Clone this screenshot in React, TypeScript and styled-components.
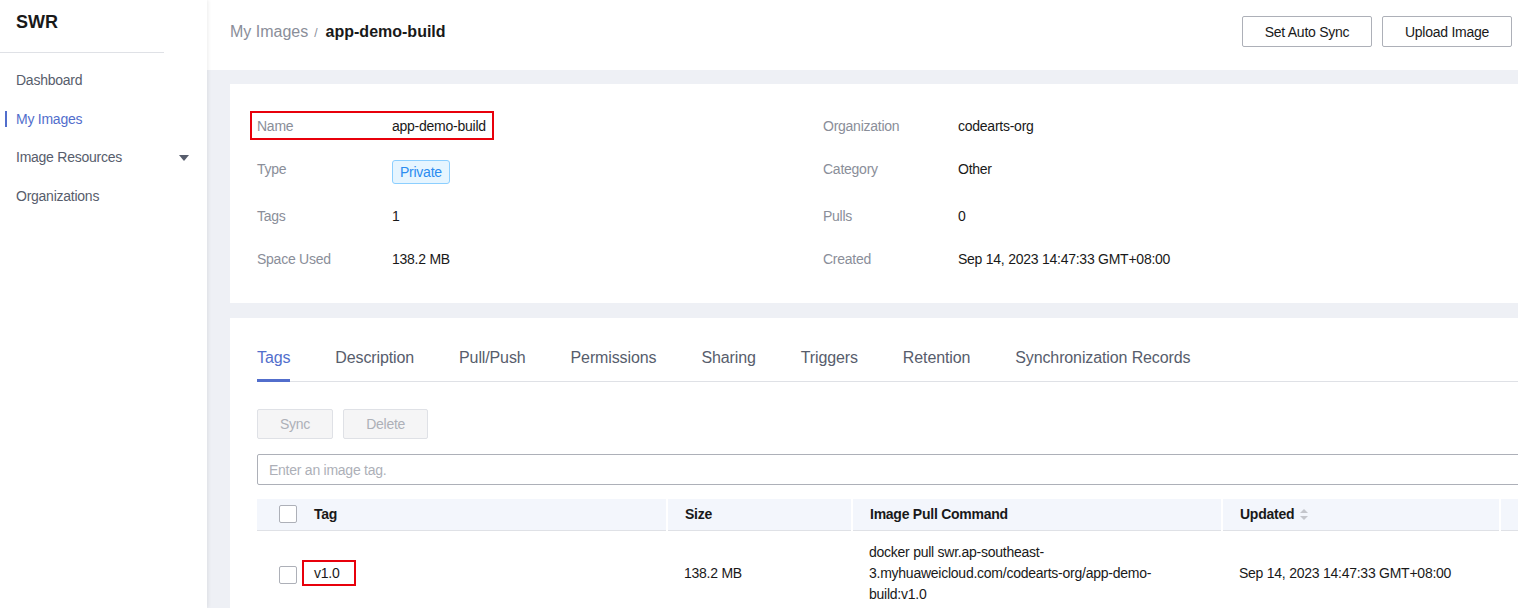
import React from "react";
import styled, { createGlobalStyle } from "styled-components";

const GlobalStyle = createGlobalStyle`
  html, body {
    margin: 0;
    padding: 0;
    overflow: hidden;
    background: #eef0f5;
  }
  body {
    font-family: "Liberation Sans", Arial, sans-serif;
    color: #191919;
    letter-spacing: -0.25px;
  }
  * { box-sizing: border-box; }
  button, input { letter-spacing: inherit; }
`;

const Layout = styled.div`
  display: grid;
  grid-template-columns: 207px 1fr;
  width: 1518px;
  height: 608px;
  overflow: hidden;
`;

const Sidebar = styled.aside`
  background: #fff;
  box-shadow: 1px 0 4px rgba(0, 0, 0, 0.08);
  position: relative;
  z-index: 1;
  display: flex;
  flex-direction: column;
`;

const Brand = styled.div`
  font-size: 18px;
  font-weight: 700;
  line-height: 24px;
  letter-spacing: 0;
  padding: 10px 0 0 16px;
  height: 53px;
  width: 164px;
  border-bottom: 1px solid #dfe1e6;
`;

const Menu = styled.nav`
  display: flex;
  flex-direction: column;
  padding-top: 8px;
`;

const MenuItem = styled.div<{ $active?: boolean }>`
  position: relative;
  display: flex;
  align-items: center;
  justify-content: space-between;
  height: 38.5px;
  padding: 0 18px 0 16px;
  font-size: 14px;
  color: ${(p) => (p.$active ? "#526ecc" : "#575d6c")};
  &::before {
    content: "";
    display: ${(p) => (p.$active ? "block" : "none")};
    position: absolute;
    left: 5px;
    top: 11px;
    width: 2px;
    height: 16px;
    background: #526ecc;
  }
`;

const Caret = styled.span`
  width: 0;
  height: 0;
  border-left: 5px solid transparent;
  border-right: 5px solid transparent;
  border-top: 6px solid #575d6c;
  margin-top: 1px;
`;

const Main = styled.main`
  display: flex;
  flex-direction: column;
  overflow: hidden;
  min-width: 0;
`;

const Header = styled.header`
  height: 70px;
  flex: none;
  background: #fff;
  display: flex;
  align-items: flex-start;
  justify-content: space-between;
  padding: 16px 6px 0 23px;
`;

const Breadcrumb = styled.div`
  display: flex;
  align-items: center;
  font-size: 16px;
  line-height: 22px;
  letter-spacing: 0;
  margin-top: 4px;
`;

const CrumbLink = styled.span`
  color: #8a8e99;
`;

const CrumbSep = styled.span`
  color: #8a8e99;
  font-size: 12px;
  margin: 2px 8px 0 6px;
`;

const CrumbCurrent = styled.span`
  font-weight: 700;
  color: #191919;
`;

const HeaderActions = styled.div`
  display: flex;
  gap: 10px;
`;

const OutlineButton = styled.button`
  height: 31px;
  width: 130px;
  border: 1px solid #adb0b8;
  border-radius: 2px;
  background: #fff;
  font-family: inherit;
  font-size: 14px;
  color: #191919;
  padding: 0;
`;

const Content = styled.div`
  flex: 1;
  display: flex;
  flex-direction: column;
  gap: 15px;
  padding: 14px 0 0 23px;
  width: calc(100% + 60px);
`;

const Card = styled.section`
  background: #fff;
`;

const InfoCard = styled(Card)`
  padding: 32px 0 34px 27px;
`;

const InfoGrid = styled.div`
  display: grid;
  grid-template-columns: 566px 1fr;
  grid-template-rows: 20px 24px 20px 20px;
  row-gap: 23px;
`;

const Field = styled.div<{ $highlight?: boolean }>`
  position: relative;
  display: flex;
  align-items: flex-start;
  justify-self: start;
  font-size: 14px;
  line-height: 20px;
  &::after {
    content: "";
    display: ${(p) => (p.$highlight ? "block" : "none")};
    position: absolute;
    top: -5px;
    bottom: -4px;
    left: -7px;
    right: -8px;
    border: 2px solid #e8000b;
    pointer-events: none;
  }
`;

const FieldLabel = styled.span`
  width: 135px;
  color: #8a8e99;
  flex: none;
`;

const FieldValue = styled.span`
  color: #191919;
`;

const TypeTag = styled.span`
  display: inline-flex;
  align-items: center;
  height: 24px;
  margin-top: 1px;
  padding: 0 7px;
  border: 1px solid #8ccfff;
  border-radius: 3px;
  background: #e6f5ff;
  color: #2c8cf0;
  font-size: 14px;
`;

const TabsCard = styled(Card)`
  flex: 1;
  padding: 28px 0 0 27px;
  overflow: hidden;
`;

const TabBar = styled.div`
  display: flex;
  gap: 45px;
  border-bottom: 1px solid #dfe1e6;
`;

const Tab = styled.div<{ $active?: boolean }>`
  font-size: 16px;
  line-height: 24px;
  letter-spacing: -0.12px;
  padding-bottom: 9px;
  margin-bottom: -1px;
  white-space: nowrap;
  color: ${(p) => (p.$active ? "#526ecc" : "#575d6c")};
  border-bottom: 3px solid ${(p) => (p.$active ? "#526ecc" : "transparent")};
`;

const Toolbar = styled.div`
  display: flex;
  gap: 10px;
  margin-top: 27px;
`;

const DisabledButton = styled.button`
  height: 30px;
  padding: 0 22px;
  border: 1px solid #dfe1e6;
  border-radius: 2px;
  background: #f5f5f6;
  font-family: inherit;
  font-size: 14px;
  color: #adb0b8;
`;

const SearchInput = styled.input`
  display: block;
  width: 100%;
  height: 31px;
  margin-top: 15px;
  padding: 0 11px;
  border: 1px solid #adb0b8;
  border-radius: 2px;
  font-family: inherit;
  font-size: 14px;
  color: #191919;
  outline: none;
  &::placeholder {
    color: #adb0b8;
  }
`;

const Table = styled.table`
  margin-top: 14px;
  border-collapse: collapse;
  table-layout: fixed;
  width: 1443px;
  font-size: 14px;
`;

const Th = styled.th<{ $first?: boolean }>`
  height: 31px;
  padding: 0 0 0 ${(p) => (p.$first ? "22px" : "17px")};
  background: #f3f6fc;
  border-right: 2px solid #fff;
  border-bottom: 1px solid #dfe1e6;
  text-align: left;
  font-weight: 700;
  color: #191919;
  white-space: nowrap;
  vertical-align: middle;
`;

const Td = styled.td<{ $first?: boolean }>`
  padding: 11px 17px 10px ${(p) => (p.$first ? "22px" : "17px")};
  line-height: 21px;
  color: #191919;
  vertical-align: middle;
  text-align: left;
`;

const CellFlex = styled.div`
  display: flex;
  align-items: center;
  gap: 17px;
`;

const Checkbox = styled.span<{ $offset?: number }>`
  display: inline-block;
  width: 18px;
  height: 18px;
  flex: none;
  border: 1px solid #adb0b8;
  border-radius: 2px;
  background: #fff;
  margin-top: ${(p) => p.$offset ?? 0}px;
`;

const Marked = styled.span`
  position: relative;
  display: inline-block;
  line-height: 16px;
  &::after {
    content: "";
    position: absolute;
    top: -5px;
    bottom: -5px;
    left: -12px;
    right: -17px;
    border: 2px solid #e8000b;
  }
`;

const SortIcon = styled.svg`
  margin-left: 6px;
  vertical-align: -1px;
`;

const fields: { label: string; value: React.ReactNode; highlight?: boolean }[] = [
  { label: "Name", value: "app-demo-build", highlight: true },
  { label: "Organization", value: "codearts-org" },
  { label: "Type", value: <TypeTag>Private</TypeTag> },
  { label: "Category", value: "Other" },
  { label: "Tags", value: "1" },
  { label: "Pulls", value: "0" },
  { label: "Space Used", value: "138.2 MB" },
  { label: "Created", value: "Sep 14, 2023 14:47:33 GMT+08:00" },
];

const tabs = [
  "Tags",
  "Description",
  "Pull/Push",
  "Permissions",
  "Sharing",
  "Triggers",
  "Retention",
  "Synchronization Records",
];

export default function App() {
  return (
    <>
      <GlobalStyle />
      <Layout>
        <Sidebar>
          <Brand>SWR</Brand>
          <Menu>
            <MenuItem>Dashboard</MenuItem>
            <MenuItem $active>My Images</MenuItem>
            <MenuItem>
              Image Resources
              <Caret />
            </MenuItem>
            <MenuItem>Organizations</MenuItem>
          </Menu>
        </Sidebar>
        <Main>
          <Header>
            <Breadcrumb>
              <CrumbLink>My Images</CrumbLink>
              <CrumbSep>/</CrumbSep>
              <CrumbCurrent>app-demo-build</CrumbCurrent>
            </Breadcrumb>
            <HeaderActions>
              <OutlineButton>Set Auto Sync</OutlineButton>
              <OutlineButton>Upload Image</OutlineButton>
            </HeaderActions>
          </Header>
          <Content>
            <InfoCard>
              <InfoGrid>
                {fields.map((f) => (
                  <Field key={f.label} $highlight={f.highlight}>
                    <FieldLabel>{f.label}</FieldLabel>
                    <FieldValue>{f.value}</FieldValue>
                  </Field>
                ))}
              </InfoGrid>
            </InfoCard>
            <TabsCard>
              <TabBar>
                {tabs.map((t, i) => (
                  <Tab key={t} $active={i === 0}>
                    {t}
                  </Tab>
                ))}
              </TabBar>
              <Toolbar>
                <DisabledButton>Sync</DisabledButton>
                <DisabledButton>Delete</DisabledButton>
              </Toolbar>
              <SearchInput placeholder="Enter an image tag." readOnly />
              <Table>
                <colgroup>
                  <col style={{ width: 410 }} />
                  <col style={{ width: 185 }} />
                  <col style={{ width: 370 }} />
                  <col style={{ width: 278 }} />
                  <col style={{ width: 200 }} />
                </colgroup>
                <thead>
                  <tr>
                    <Th $first>
                      <CellFlex>
                        <Checkbox />
                        Tag
                      </CellFlex>
                    </Th>
                    <Th>Size</Th>
                    <Th>Image Pull Command</Th>
                    <Th>
                      Updated
                      <SortIcon width="8" height="11" viewBox="0 0 8 11">
                        <path d="M4 0 L8 4 L0 4 Z" fill="#c4c6cc" />
                        <path d="M0 7 L8 7 L4 11 Z" fill="#c4c6cc" />
                      </SortIcon>
                    </Th>
                    <Th>Operation</Th>
                  </tr>
                </thead>
                <tbody>
                  <tr>
                    <Td $first>
                      <CellFlex>
                        <Checkbox $offset={3} />
                        <Marked>v1.0</Marked>
                      </CellFlex>
                    </Td>
                    <Td>138.2 MB</Td>
                    <Td>
                      docker pull swr.ap-southeast-
                      <br />
                      3.myhuaweicloud.com/codearts-org/app-demo-
                      <br />
                      build:v1.0
                    </Td>
                    <Td>Sep 14, 2023 14:47:33 GMT+08:00</Td>
                    <Td />
                  </tr>
                </tbody>
              </Table>
            </TabsCard>
          </Content>
        </Main>
      </Layout>
    </>
  );
}
